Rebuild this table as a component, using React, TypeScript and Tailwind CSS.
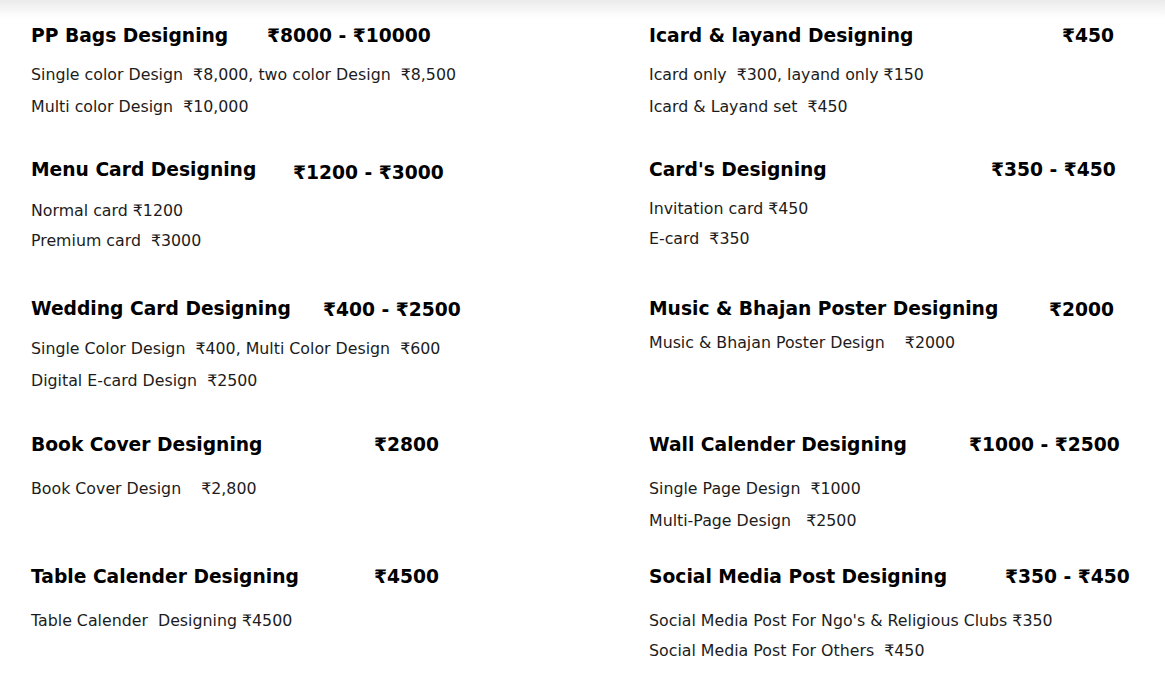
import React from "react";

type Section = {
  title: string;
  price: string;
  titleW: string;
  priceCls?: string;
  bodyCls: string;
  lines: string[];
};

const rows: { h: string; left: Section; right: Section }[] = [
  {
    h: "h-[134px]",
    left: {
      title: "PP Bags Designing",
      price: "₹8000 - ₹10000",
      titleW: "w-[236px]",
      bodyCls: "mt-[11px] leading-[32px]",
      lines: ["Single color Design  ₹8,000, two color Design  ₹8,500", "Multi color Design  ₹10,000"],
    },
    right: {
      title: "Icard & layand Designing",
      price: "₹450",
      titleW: "w-[413px]",
      bodyCls: "mt-[11px] leading-[32px]",
      lines: ["Icard only  ₹300, layand only ₹150", "Icard & Layand set  ₹450"],
    },
  },
  {
    h: "h-[139px]",
    left: {
      title: "Menu Card Designing",
      price: "₹1200 - ₹3000",
      titleW: "w-[262px]",
      priceCls: "mt-[3px]",
      bodyCls: "mt-[11px] leading-[30px]",
      lines: ["Normal card ₹1200", "Premium card  ₹3000"],
    },
    right: {
      title: "Card's Designing",
      price: "₹350 - ₹450",
      titleW: "w-[342px]",
      bodyCls: "mt-[12px] leading-[30px]",
      lines: ["Invitation card ₹450", "E-card  ₹350"],
    },
  },
  {
    h: "h-[136px]",
    left: {
      title: "Wedding Card Designing",
      price: "₹400 - ₹2500",
      titleW: "w-[292px]",
      priceCls: "mt-[1px]",
      bodyCls: "mt-[11px] leading-[32px]",
      lines: ["Single Color Design  ₹400, Multi Color Design  ₹600", "Digital E-card Design  ₹2500"],
    },
    right: {
      title: "Music & Bhajan Poster Designing",
      price: "₹2000",
      titleW: "w-[400px]",
      priceCls: "mt-[1px]",
      bodyCls: "mt-[5px] leading-[32px]",
      lines: ["Music & Bhajan Poster Design    ₹2000"],
    },
  },
  {
    h: "h-[132px]",
    left: {
      title: "Book Cover Designing",
      price: "₹2800",
      titleW: "w-[343px]",
      bodyCls: "mt-[16px] leading-[32px]",
      lines: ["Book Cover Design    ₹2,800"],
    },
    right: {
      title: "Wall Calender Designing",
      price: "₹1000 - ₹2500",
      titleW: "w-[320px]",
      bodyCls: "mt-[16px] leading-[32px]",
      lines: ["Single Page Design  ₹1000", "Multi-Page Design   ₹2500"],
    },
  },
  {
    h: "h-[116px]",
    left: {
      title: "Table Calender Designing",
      price: "₹4500",
      titleW: "w-[343px]",
      bodyCls: "mt-[16px] leading-[32px]",
      lines: ["Table Calender  Designing ₹4500"],
    },
    right: {
      title: "Social Media Post Designing",
      price: "₹350 - ₹450",
      titleW: "w-[356px]",
      bodyCls: "mt-[17px] leading-[30px]",
      lines: ["Social Media Post For Ngo's & Religious Clubs ₹350", "Social Media Post For Others  ₹450"],
    },
  },
];

function Block({ s }: { s: Section }) {
  return (
    <div className="flex flex-col">
      <div className="flex items-start text-[18.7px] font-bold leading-[24px] text-black">
        <h3 className={`${s.titleW} shrink-0 whitespace-nowrap`}>{s.title}</h3>
        <span className={`whitespace-nowrap ${s.priceCls ?? ""}`}>{s.price}</span>
      </div>
      <div className={`${s.bodyCls} text-[15.8px] text-[#1c1c1c] whitespace-pre`}>
        {s.lines.map((l) => (
          <p key={l}>{l}</p>
        ))}
      </div>
    </div>
  );
}

export default function App() {
  return (
    <div className="min-h-[681px] w-full bg-white font-['DejaVu_Sans','Noto_Sans',sans-serif]">
      <div className="h-[18px] bg-gradient-to-b from-[#ebebeb] to-white" />
      <div className="pl-[31px] pt-[6px]">
        {rows.map((r, i) => (
          <div key={i} className={`grid grid-cols-[618px_1fr] ${r.h}`}>
            <Block s={r.left} />
            <Block s={r.right} />
          </div>
        ))}
      </div>
    </div>
  );
}
